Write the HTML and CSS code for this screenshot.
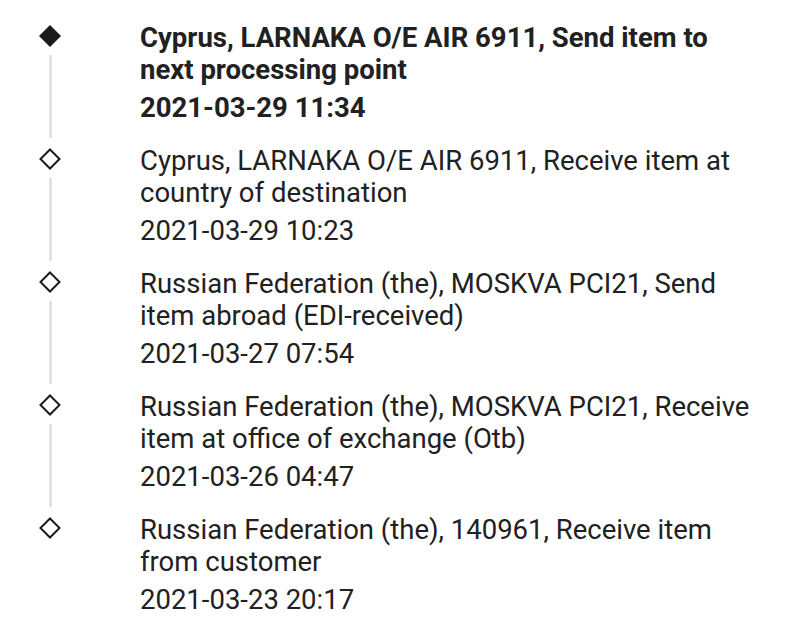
FILE: index.html
```html
<!DOCTYPE html>
<html>
<head>
<meta charset="utf-8">
<link rel="stylesheet" href="styles.css">
</head>
<body>
<ul class="timeline">
  <li class="event current">
    <div class="rail">
      <svg class="marker" viewBox="0 0 24 24" width="24" height="24"><polygon points="12,1 23,12 12,23 1,12" fill="#1a1a1a"/></svg>
      <span class="line"></span>
    </div>
    <div class="info">
      <div class="title">Cyprus, LARNAKA O/E AIR 6911, Send item to next processing point</div>
      <div class="date">2021-03-29 11:34</div>
    </div>
  </li>
  <li class="event">
    <div class="rail">
      <svg class="marker" viewBox="0 0 24 24" width="24" height="24"><polygon points="12,2.5 21.5,12 12,21.5 2.5,12" fill="none" stroke="#1a1a1a" stroke-width="2"/></svg>
      <span class="line"></span>
    </div>
    <div class="info">
      <div class="title">Cyprus, LARNAKA O/E AIR 6911, Receive item at country of destination</div>
      <div class="date">2021-03-29 10:23</div>
    </div>
  </li>
  <li class="event">
    <div class="rail">
      <svg class="marker" viewBox="0 0 24 24" width="24" height="24"><polygon points="12,2.5 21.5,12 12,21.5 2.5,12" fill="none" stroke="#1a1a1a" stroke-width="2"/></svg>
      <span class="line"></span>
    </div>
    <div class="info">
      <div class="title">Russian Federation (the), MOSKVA PCI21, Send item abroad (EDI-received)</div>
      <div class="date">2021-03-27 07:54</div>
    </div>
  </li>
  <li class="event">
    <div class="rail">
      <svg class="marker" viewBox="0 0 24 24" width="24" height="24"><polygon points="12,2.5 21.5,12 12,21.5 2.5,12" fill="none" stroke="#1a1a1a" stroke-width="2"/></svg>
      <span class="line"></span>
    </div>
    <div class="info">
      <div class="title">Russian Federation (the), MOSKVA PCI21, Receive item at office of exchange (Otb)</div>
      <div class="date">2021-03-26 04:47</div>
    </div>
  </li>
  <li class="event last">
    <div class="rail">
      <svg class="marker" viewBox="0 0 24 24" width="24" height="24"><polygon points="12,2.5 21.5,12 12,21.5 2.5,12" fill="none" stroke="#1a1a1a" stroke-width="2"/></svg>
    </div>
    <div class="info">
      <div class="title">Russian Federation (the), 140961, Receive item from customer</div>
      <div class="date">2021-03-23 20:17</div>
    </div>
  </li>
</ul>
</body>
</html>
```
FILE: styles.css
```css
html, body {
  margin: 0;
  padding: 0;
  background: #ffffff;
}
body {
  font-family: Roboto, "Noto Sans", sans-serif;
  color: #212121;
}
.timeline {
  list-style: none;
  margin: 0;
  padding: 22px 40px 0 0;
}
.event {
  display: flex;
  padding-bottom: 21px;
}
.rail {
  width: 100px;
  flex: none;
  display: flex;
  flex-direction: column;
  align-items: center;
  margin-right: 40px;
  margin-bottom: -14px;
}
.marker {
  display: block;
  margin-top: 2px;
  flex: none;
}
.line {
  flex: 1;
  width: 3px;
  background: #e2e2e2;
  margin-top: 7px;
}
.info {
  flex: 1;
  font-size: 27.5px;
}
.title {
  line-height: 32px;
}
.date {
  line-height: 32px;
  margin-top: 6px;
}
.current .title,
.current .date {
  font-weight: 700;
}
```
